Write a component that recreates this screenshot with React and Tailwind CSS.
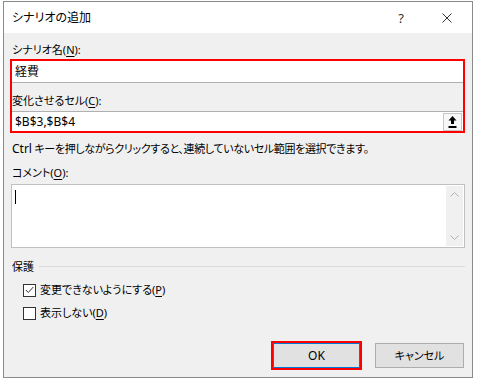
export default function App() {
  return (
    <div className="w-[478px] h-[380px] bg-white pt-[1px] pl-[3px] text-[11px] leading-[16px] text-[#000] [font-family:'Noto_Sans','Noto_Sans_CJK_JP',sans-serif] [font-feature-settings:'palt']">
      <div className="w-[470px] h-[377px] border border-[#8a8a8a] bg-[#f0f0f0] flex flex-col">
        {/* title bar */}
        <div className="h-[31px] bg-white flex items-center">
          <span className="pl-[8px] text-[12px]">シナリオの追加</span>
          <span className="ml-auto w-[10px] text-center text-[13px] text-[#333]">?</span>
          <svg className="ml-[36px] mr-[20px]" width="10" height="10" viewBox="0 0 10 10">
            <path d="M0.5 0.5 L9.5 9.5 M9.5 0.5 L0.5 9.5" stroke="#333" strokeWidth="1" fill="none" />
          </svg>
        </div>
        {/* body */}
        <div className="pl-[6px] flex flex-col">
          <div className="mt-[9px] pl-[2px] h-[16px]">
            シナリオ名(<span className="underline underline-offset-2">N</span>):
          </div>
          <div className="mt-[1px] w-[455px] border-2 border-[#f00] flex flex-col">
            <div className="h-[22px] bg-white border-b border-[#b0b0b0] flex items-center pl-[3px] text-[12px]">経費</div>
            <div className="h-[28px] pt-[10px]">
              変化させるセル(<span className="underline underline-offset-2">C</span>):
            </div>
            <div className="h-[20px] bg-white border-t border-[#b0b0b0] flex items-center">
              <span className="pl-[3px] text-[12px]">$B$3,$B$4</span>
              <div className="ml-auto mr-[1px] w-[19px] h-[18px] border border-[#c8c8c8] bg-[#f7f7f7] flex items-center justify-center">
                <svg width="9" height="12" viewBox="0 0 9 12">
                  <path d="M4.5 0 L8.5 4.5 L6 4.5 L6 8 L3 8 L3 4.5 L0.5 4.5 Z" fill="#000" />
                  <rect x="0.5" y="10" width="8" height="2" fill="#000" />
                </svg>
              </div>
            </div>
          </div>
          <div className="mt-[8px] pl-[2px] h-[16px] whitespace-nowrap tracking-[-0.35px]">
            <span className="text-[12px] tracking-normal">Ctrl</span> キーを押しながらクリックすると、連続していないセル範囲を選択できます。
          </div>
          <div className="mt-[8px] pl-[2px] h-[16px]">
            コメント(<span className="underline underline-offset-2">O</span>):
          </div>
          <div className="mt-[3px] ml-[1px] w-[454px] h-[64px] bg-white border border-[#c0c0c0] flex">
            <div className="mt-[5px] ml-[3px] w-px h-[14px] bg-black" />
            <div className="ml-auto mr-px my-px w-[17px] bg-[#f0f0f0] flex flex-col items-center justify-between py-[6px]">
              <svg width="9" height="5" viewBox="0 0 9 5">
                <path d="M0.5 4.5 L4.5 0.5 L8.5 4.5" stroke="#b0b0b0" fill="none" />
              </svg>
              <svg width="9" height="5" viewBox="0 0 9 5">
                <path d="M0.5 0.5 L4.5 4.5 L8.5 0.5" stroke="#b0b0b0" fill="none" />
              </svg>
            </div>
          </div>
          <div className="mt-[11px] pl-[2px] h-[16px] flex items-center w-[455px]">
            <span>保護</span>
            <div className="ml-[5px] flex-1 h-px bg-[#dcdcdc] mb-[2px]" />
          </div>
          <div className="mt-[7px] h-[16px] flex items-center pl-[13px]">
            <div className="w-[13px] h-[13px] border border-[#333] bg-white flex items-center justify-center">
              <svg width="9" height="8" viewBox="0 0 9 8">
                <path d="M0.8 4 L3.3 6.5 L8.3 1" stroke="#333" strokeWidth="1" fill="none" />
              </svg>
            </div>
            <span className="ml-[4px]">
              変更できないようにする(<span className="underline underline-offset-2">P</span>)
            </span>
          </div>
          <div className="mt-[7px] h-[16px] flex items-center pl-[13px]">
            <div className="w-[13px] h-[13px] border border-[#333] bg-white" />
            <span className="ml-[4px]">
              表示しない(<span className="underline underline-offset-2">D</span>)
            </span>
          </div>
          <div className="mt-[20px] flex items-center justify-end pr-[8px]">
            <div className="border-2 border-[#f00]">
              <div className="w-[87px] h-[25px] bg-[#e1e1e1] border border-[#0078d7] flex items-center justify-center text-[12px]">
                OK
              </div>
            </div>
            <div className="ml-[13px] w-[89px] h-[25px] bg-[#e1e1e1] border border-[#adadad] flex items-center justify-center">
              キャンセル
            </div>
          </div>
        </div>
      </div>
    </div>
  );
}
